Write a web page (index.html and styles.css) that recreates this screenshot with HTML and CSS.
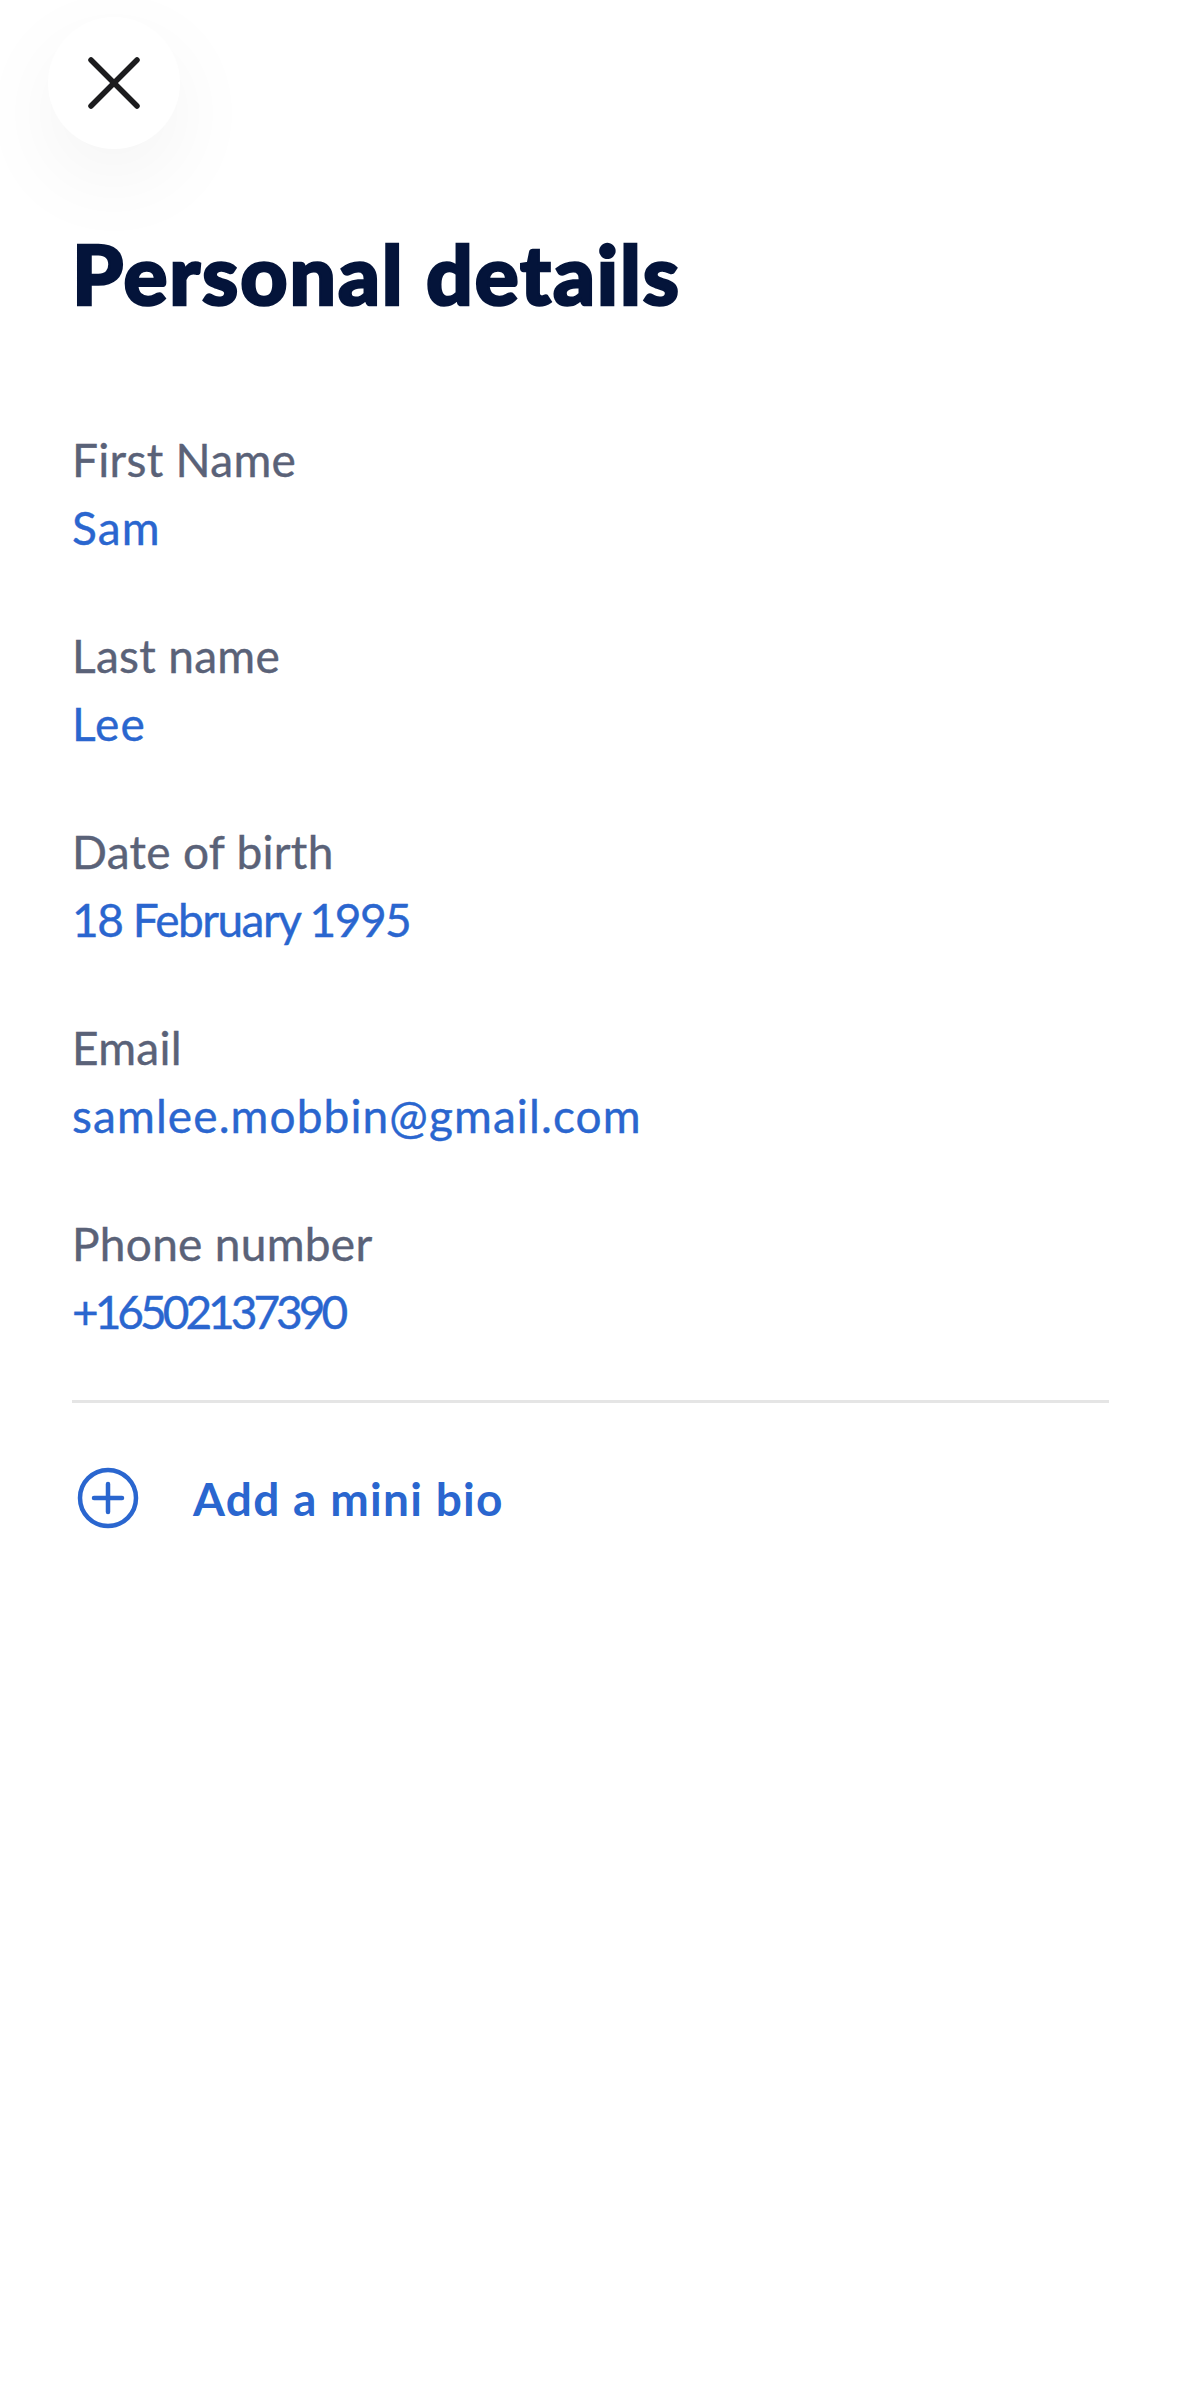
FILE: index.html

```html
<!DOCTYPE html>
<html>
<head>
    <title>Personal details</title>
    <link rel="stylesheet" href="styles.css">
</head>
<body>
    <button class="close-button" aria-label="Close">
        <svg width="52" height="52" viewBox="0 0 52 52" fill="none" stroke="#1c1c1e" stroke-width="5.5" stroke-linecap="round">
            <path d="M3 3L49 49"/>
            <path d="M49 3L3 49"/>
        </svg>
    </button>
    <h1 class="page-title">Personal details</h1>
    <div class="details">
        <div class="field">
            <div class="field-label">First Name</div>
            <div class="field-value">Sam</div>
        </div>
        <div class="field">
            <div class="field-label">Last name</div>
            <div class="field-value">Lee</div>
        </div>
        <div class="field">
            <div class="field-label">Date of birth</div>
            <div class="field-value date">18 February 1995</div>
        </div>
        <div class="field">
            <div class="field-label">Email</div>
            <div class="field-value">samlee.mobbin@gmail.com</div>
        </div>
        <div class="field">
            <div class="field-label">Phone number</div>
            <div class="field-value phone">+16502137390</div>
        </div>
    </div>
    <div class="add-bio">
        <svg width="66" height="66" viewBox="0 0 66 66" fill="none" stroke="#2a66cf" stroke-width="4.5" stroke-linecap="round">
            <circle cx="33" cy="33" r="28"/>
            <path d="M19 33H47"/>
            <path d="M33 19V47"/>
        </svg>
        <span class="add-bio-text">Add a mini bio</span>
    </div>
</body>
</html>
```

FILE: styles.css

```css
body {
    margin: 0;
    background: #fff;
    font-family: Lato, "Open Sans", sans-serif;
}
.close-button {
    display: flex;
    align-items: center;
    justify-content: center;
    width: 132px;
    height: 132px;
    margin: 17px 0 0 48px;
    padding: 0;
    border: none;
    border-radius: 50%;
    background: #fff;
    box-shadow: 0 30px 90px rgba(0, 0, 0, 0.05);
}
.page-title {
    margin: 74px 0 0 72px;
    font-size: 82px;
    line-height: 100px;
    font-weight: 900;
    letter-spacing: 1.9px;
    color: #04143a;
    -webkit-text-stroke: 2.5px #04143a;
}
.details {
    margin: 0 70px 0 72px;
    padding: 110px 0 61px;
    border-bottom: 3px solid #e5e5e5;
}
.field {
    margin-bottom: 74px;
}
.field:last-child {
    margin-bottom: 0;
}
.field-label {
    font-size: 46px;
    line-height: 54px;
    letter-spacing: 0.3px;
    color: #5a6278;
    -webkit-text-stroke: 0.4px #5a6278;
}
.field-value {
    margin-top: 14px;
    font-size: 46px;
    line-height: 54px;
    letter-spacing: 1.1px;
    color: #2a66cf;
    -webkit-text-stroke: 0.4px #2a66cf;
}
.field-value.date {
    letter-spacing: -1.5px;
}
.field-value.phone {
    letter-spacing: -4px;
}
.add-bio {
    display: flex;
    align-items: center;
    margin: 62px 0 0 75px;
}
.add-bio-text {
    margin-left: 52px;
    font-size: 46px;
    font-weight: 700;
    letter-spacing: 1.3px;
    color: #2a66cf;
}
```
